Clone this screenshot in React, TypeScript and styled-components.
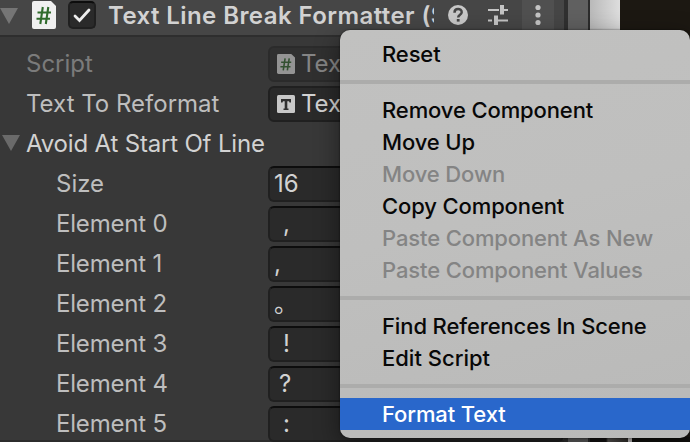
import React from "react";
import styled, { createGlobalStyle } from "styled-components";

const Global = createGlobalStyle`
  html, body { margin: 0; padding: 0; background: #383838; }
  * { box-sizing: border-box; }
`;

const Screen = styled.div`
  position: relative;
  width: 690px;
  height: 442px;
  overflow: hidden;
  display: flex;
  font-family: Inter, "Liberation Sans", "Noto Sans CJK SC", sans-serif;
  background: #1c1812;
`;

const Inspector = styled.section`
  width: 564px;
  flex: none;
  height: 442px;
  overflow: hidden;
  background: #383838;
`;

const Header = styled.header`
  height: 37px;
  display: flex;
  align-items: flex-start;
  background: #464646;
  border-bottom: 2px solid #2e2e2e;
`;

const Foldout = styled.svg<{ $header?: boolean }>`
  flex: none;
  width: 18px;
  height: 16px;
  margin: ${(p) => (p.$header ? "8px 14px 0 0" : "0 6px 0 2px")};
`;

const HeaderIcon = styled.svg`
  flex: none;
  width: 24px;
  height: 28px;
  margin: 1px 12px 0 0;
`;

const Checkbox = styled.div`
  flex: none;
  width: 28px;
  height: 28px;
  margin: 1px 12px 0 0;
  border: 2px solid #202020;
  border-top-color: #0d0d0d;
  border-radius: 5px;
  background: #2a2a2a;
`;

const CheckMark = styled.svg`
  display: block;
  width: 24px;
  height: 24px;
`;

const Title = styled.div`
  flex: none;
  width: 326px;
  height: 35px;
  overflow: hidden;
  white-space: nowrap;
  font-size: 24px;
  font-weight: 600;
  line-height: 31px;
  letter-spacing: 0.42px;
  color: #d2d2d2;
`;

const Tool = styled.div<{ $width: number; $lit?: boolean }>`
  flex: none;
  width: ${(p) => p.$width}px;
  height: 35px;
  display: flex;
  justify-content: center;
  padding-top: 4px;
  margin-left: ${(p) => (p.$lit ? 8 : 0)}px;
  background: ${(p) => (p.$lit ? "#505050" : "transparent")};
`;

const Rows = styled.div`
  height: 405px;
  padding-top: 6px;
  border-bottom: 2px solid #2c2c2c;
`;

const Row = styled.div<{ $dim?: boolean }>`
  height: 40px;
  display: flex;
  align-items: center;
  opacity: ${(p) => (p.$dim ? 0.5 : 1)};
`;

const Label = styled.div<{ $inset: number; $space?: number; $bright?: boolean }>`
  flex: none;
  width: ${(p) => (p.$inset ? 268 : 242)}px;
  padding: 2px 0 0 ${(p) => p.$inset}px;
  white-space: nowrap;
  font-size: 24px;
  line-height: 36px;
  letter-spacing: ${(p) => p.$space ?? 0}px;
  color: ${(p) => (p.$bright ? "#d2d2d2" : "#bebebe")};
`;

const Field = styled.div<{ $object?: boolean; $pad: number }>`
  flex: 1;
  height: 36px;
  margin-top: 2px;
  display: flex;
  align-items: center;
  padding-left: ${(p) => p.$pad}px;
  border: 2px solid #202020;
  border-top-color: ${(p) => (p.$object ? "#202020" : "#0d0d0d")};
  border-radius: 6px;
  background: #2a2a2a;
  color: #d2d2d2;
  font-size: 24px;
  line-height: 32px;
  white-space: pre;
`;

const FieldIcon = styled.svg`
  flex: none;
  width: 18px;
  height: 20px;
  margin-right: 6px;
`;

const Gutter = styled.div`
  width: 26px;
  flex: none;
  background: #606060;
  border-left: 4px solid #303030;
  border-right: 2px solid #2c2c2c;
`;

const Scene = styled.div`
  flex: 1;
  display: flex;
  flex-direction: column;
  justify-content: space-between;
  background: linear-gradient(90deg, #b9b9b9, #dedede 30px, #1c1812 30px);
`;

const SceneFloor = styled.div`
  height: 5px;
  background: linear-gradient(90deg, #151313 16px, #5b5855 18px, #34312e 38px, #c8c4c4 38px, #c8c4c4 42px, #12110e 42px);
`;

const Menu = styled.div`
  position: absolute;
  left: 340px;
  top: 30px;
  width: 350px;
  height: 408px;
  padding: 8px 0;
  border-radius: 10px;
  background: linear-gradient(165deg, #c1c1c0 0%, #bfbfbe 45%, #b9b9b8 100%);
  box-shadow: 0 0 2px rgba(0, 0, 0, 0.65), 0 8px 26px rgba(0, 0, 0, 0.45);
`;

const Item = styled.div<{ $state?: "off" | "active"; $space?: number }>`
  height: 32px;
  padding-left: 42px;
  font-size: 22px;
  font-weight: 500;
  line-height: 32px;
  letter-spacing: ${(p) => p.$space ?? -0.12}px;
  white-space: nowrap;
  color: ${(p) => (p.$state === "off" ? "#848484" : p.$state === "active" ? "#fff" : "#080808")};
  background: ${(p) => (p.$state === "active" ? "#2967cb" : "transparent")};
`;

const Separator = styled.div`
  height: 4px;
  margin: 10px 0;
  background: #acacab;
`;

const Arrow = ({ header }: { header?: boolean }) => (
  <Foldout $header={header} viewBox="0 0 18 16">
    <path d="M0 0h18L9 16z" fill={header ? "#757575" : "#6a6a6a"} />
  </Foldout>
);

const ScriptShape = () => (
  <>
    <path d="M2 0h17l5 5v21a2 2 0 0 1-2 2H2a2 2 0 0 1-2-2V2a2 2 0 0 1 2-2z" fill="#f0f0f0" />
    <path d="M10.800 6L8.300 23M16.300 6l-2.500 17M5.500 11.500H19M4.500 17.800H18" fill="none" stroke="#2f6b2b" strokeWidth="2.100" />
  </>
);

const elements: { name: string; value: string; pad: number }[] = [
  { name: "Element 0", value: ",", pad: 13 },
  { name: "Element 1", value: ",", pad: 4 },
  { name: "Element 2", value: "。", pad: 4 },
  { name: "Element 3", value: "!", pad: 13 },
  { name: "Element 4", value: "?", pad: 9 },
  { name: "Element 5", value: ":", pad: 13 },
];

export default function App() {
  return (
    <Screen>
      <Global />
      <Inspector>
        <Header>
          <Arrow header />
          <HeaderIcon viewBox="0 0 24 28"><ScriptShape /></HeaderIcon>
          <Checkbox>
            <CheckMark viewBox="0 0 24 24">
              <path d="M5 13l4.500 4.500L19 7" fill="none" stroke="#ededed" strokeWidth="2.800" strokeLinecap="round" />
            </CheckMark>
          </Checkbox>
          <Title>Text Line Break Formatter (S</Title>
          <Tool $width={48}>
            <svg width="22" height="22" viewBox="0 0 22 22">
              <circle cx="11" cy="11" r="10" fill="#c8c8c8" />
              <path d="M7.500 8.700c0-5 7.200-4.600 7.200-.500 0 2.500-3.500 2.500-3.500 5.200" fill="none" stroke="#464646" strokeWidth="2.500" />
              <path d="M9.800 15h2.800v2.600H9.800z" fill="#464646" />
            </svg>
          </Tool>
          <Tool $width={32}>
            <svg width="22" height="22" viewBox="0 0 22 22">
              <path d="M1 6h11M17 6h4M1 16.500h4M11 16.500h10" stroke="#c4c4c4" strokeWidth="2" />
              <path d="M15 1v9.500M9 11.500v9.500" stroke="#c4c4c4" strokeWidth="4" />
            </svg>
          </Tool>
          <Tool $width={32} $lit>
            <svg width="6" height="22" viewBox="0 0 6 22" fill="#c4c4c4">
              <circle cx="3" cy="3.500" r="2.600" />
              <circle cx="3" cy="11" r="2.600" />
              <circle cx="3" cy="18.500" r="2.600" />
            </svg>
          </Tool>
        </Header>
        <Rows>
          <Row $dim>
            <Label $inset={26}>Script</Label>
            <Field $object $pad={7}>
              <FieldIcon viewBox="0 0 24 28" preserveAspectRatio="none"><ScriptShape /></FieldIcon>
              Tex
            </Field>
          </Row>
          <Row>
            <Label $inset={26}>Text To Reformat</Label>
            <Field $object $pad={7}>
              <FieldIcon viewBox="0 0 18 20">
                <rect y="1" width="18" height="18" rx="1.500" fill="#c8c8c8" />
                <path d="M4 5h10v3.500h-1.500l-.500-1.200h-1.700v7.200h1.200V16h-5v-1.500h1.200V7.300H6L5.500 8.500H4z" fill="#303030" />
              </FieldIcon>
              Tex
            </Field>
          </Row>
          <Row>
            <Arrow />
            <Label $inset={0} $bright $space={-0.18}>Avoid At Start Of Line</Label>
          </Row>
          <Row>
            <Label $inset={56}>Size</Label>
            <Field $pad={4}>16</Field>
          </Row>
          {elements.map((e) => (
            <Row key={e.name}>
              <Label $inset={56} $space={-0.2}>{e.name}</Label>
              <Field $pad={e.pad}>{e.value}</Field>
            </Row>
          ))}
        </Rows>
      </Inspector>
      <Gutter />
      <Scene>
        <span />
        <SceneFloor />
      </Scene>
      <Menu>
        <Item>Reset</Item>
        <Separator />
        <Item>Remove Component</Item>
        <Item>Move Up</Item>
        <Item $state="off">Move Down</Item>
        <Item>Copy Component</Item>
        <Item $state="off">Paste Component As New</Item>
        <Item $state="off">Paste Component Values</Item>
        <Separator />
        <Item>Find References In Scene</Item>
        <Item $space={0}>Edit Script</Item>
        <Separator />
        <Item $state="active">Format Text</Item>
      </Menu>
    </Screen>
  );
}
